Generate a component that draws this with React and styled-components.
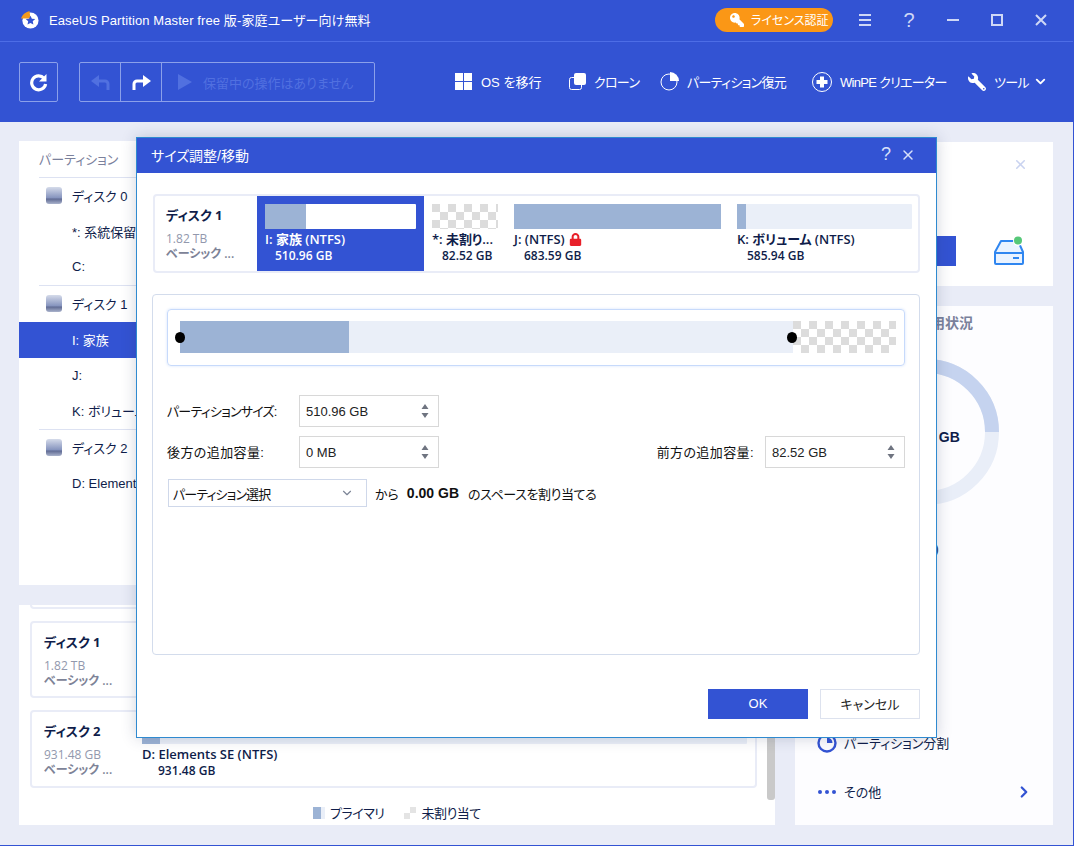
import React from "react";
import styled, { createGlobalStyle } from "styled-components";
import { ChevronDown, ChevronRight, X } from "lucide-react";
import { FaKey, FaLock, FaWrench } from "react-icons/fa";

const BLUE = "#3353d3";
const INK = "#0f1d4a";
const BAR = "#9cb3d5";
const TRACK = "#eaeff8";
const SANS = `"Liberation Sans", "Noto Sans CJK JP", sans-serif`;
const UI = `"Open Sans", "Noto Sans CJK JP", sans-serif`;

const Global = createGlobalStyle`
  html, body { margin: 0; padding: 0; }
  body { font-family: ${SANS}; font-size: 13px; color: ${INK}; font-feature-settings: "palt"; }
  * { box-sizing: border-box; }
`;

const checker = `
  background-color: #fff;
  background-image: conic-gradient(transparent 25%, #dcdcdc 0 50%, transparent 0 75%, #dcdcdc 0);
  background-size: 16px 16px;
`;

function App() {
  return (
    <>
      <Global />
      <Page>
        <Header>
          <TitleBar>
            <Logo viewBox="0 0 20 20">
              <circle cx="11" cy="11" r="8.5" fill="#fff" />
              <path d="M1 9 Q3 3 10 1 L11 9 Z" fill="#f39a1c" />
              <path d="M11 6 l1.5 3.2 3.5.4-2.6 2.3.7 3.4-3.1-1.7-3.1 1.7.7-3.4-2.6-2.3 3.5-.4z" fill={BLUE} />
            </Logo>
            <AppTitle>EaseUS Partition Master free 版-家庭ユーザー向け無料</AppTitle>
            <LicenseButton><FaKey size={14} style={{ transform: "scaleX(-1)" }} />ライセンス認証</LicenseButton>
            <WinButtons>
              <WinIcon viewBox="0 0 16 16"><path d="M2 3h12M2 8h12M2 13h12" /></WinIcon>
              <HelpMark>?</HelpMark>
              <WinIcon viewBox="0 0 16 16"><path d="M2 8h12" /></WinIcon>
              <WinIcon viewBox="0 0 16 16"><rect x="3" y="3" width="10" height="10" /></WinIcon>
              <WinIcon viewBox="0 0 16 16"><path d="M3 3l10 10M13 3L3 13" /></WinIcon>
            </WinButtons>
          </TitleBar>
          <Toolbar>
            <RefreshButton>
              <svg width="20" height="20" viewBox="0 0 20 20">
                <path d="M15 6.2A7 7 0 1 0 16.6 12" fill="none" stroke="#fff" strokeWidth="3.2" />
                <path d="M17.5 2v7.5H10z" fill="#fff" />
              </svg>
            </RefreshButton>
            <PendingGroup>
              <PendingCell $dim><ArrowIcon $flip /></PendingCell>
              <PendingCell><ArrowIcon /></PendingCell>
              <PendingText>
                <svg width="14" height="16" viewBox="0 0 14 16"><path d="M0 0l14 8-14 8z" fill="#5170e0" /></svg>
                保留中の操作はありません
              </PendingText>
            </PendingGroup>
            <ToolItems>
              <ToolItem $w={114}>
                <svg width="17" height="17" viewBox="0 0 17 17" fill="#fff"><rect width="8" height="8" /><rect x="9" width="8" height="8" /><rect y="9" width="8" height="8" /><rect x="9" y="9" width="8" height="8" /></svg>
                OS を移行
              </ToolItem>
              <ToolItem $w={91} $tight>
                <svg width="17" height="17" viewBox="0 0 17 17"><rect x=".5" y="4.5" width="12" height="12" rx="2" fill="none" stroke="#fff" /><rect x="5" y="0" width="12" height="12" rx="2" fill="#fff" /></svg>
                クローン
              </ToolItem>
              <ToolItem $w={152} $tight>
                <svg width="19" height="19" viewBox="0 0 19 19"><circle cx="9" cy="10" r="8" fill="none" stroke="#fff" /><path d="M10 0a9 9 0 0 1 9 9h-9z" fill="#fff" /></svg>
                パーティション復元
              </ToolItem>
              <ToolItem $w={156} $tight>
                <svg width="20" height="20" viewBox="0 0 20 20"><circle cx="10" cy="10" r="9.5" fill="none" stroke="#fff" /><path d="M8 4.5h4V8h3.5v4H12v3.5H8V12H4.5V8H8z" fill="#fff" /></svg>
                WinPE クリエーター
              </ToolItem>
              <ToolItem $tight>
                <FaWrench size={18} style={{ transform: "scaleX(-1)" }} />
                ツール
                <ChevronDown size={15} strokeWidth={3} style={{ marginLeft: -4 }} />
              </ToolItem>
            </ToolItems>
          </Toolbar>
        </Header>

        <Main>
          <LeftColumn>
            <TreePanel>
              <TreeHead>パーティション</TreeHead>
              <TreeRow $disk><DiskIcon />ディスク 0</TreeRow>
              <TreeRow>*: 系統保留</TreeRow>
              <TreeRow $last>C:</TreeRow>
              <TreeRow $disk><DiskIcon />ディスク 1</TreeRow>
              <TreeRow $active>I: 家族</TreeRow>
              <TreeRow>J:</TreeRow>
              <TreeRow $last>K: ボリューム</TreeRow>
              <TreeRow $disk><DiskIcon />ディスク 2</TreeRow>
              <TreeRow>D: Elements SE</TreeRow>
            </TreePanel>
            <MapPanel>
              <MapScroll>
                <CardStub />
                <DiskCard>
                  <DiskInfo name="ディスク 1" size="1.82 TB" />
                </DiskCard>
                <DiskCard>
                  <DiskInfo name="ディスク 2" size="931.48 GB" />
                  <CardPartition>
                    <UsageBar><UsageFill style={{ width: "3%" }} /></UsageBar>
                    <PartName>D: Elements SE (NTFS)</PartName>
                    <PartSize $wide>931.48 GB</PartSize>
                  </CardPartition>
                </DiskCard>
                <ScrollThumb />
              </MapScroll>
              <Legend>
                <LegendKey $primary />プライマリ
                <LegendKey />未割り当て
              </Legend>
            </MapPanel>
          </LeftColumn>

          <RightColumn>
            <InfoPanel>
              <InfoClose><X size={15} color="#c9d3f0" strokeWidth={2.5} /></InfoClose>
              <InfoActions>
                <InfoButton />
                <svg width="30" height="30" viewBox="0 0 30 30">
                  <path d="M7 5h17l5 11v11a1 1 0 0 1-1 1H2a1 1 0 0 1-1-1V16z" fill="#eaf3ff" stroke="#2f86f0" strokeWidth="2" strokeLinejoin="round" />
                  <path d="M1 17h28" stroke="#2f86f0" strokeWidth="2" />
                  <rect x="19" y="21" width="6" height="2" fill="#2f86f0" />
                  <circle cx="24" cy="5" r="5" fill="#fff" />
                  <circle cx="24" cy="4.5" r="4" fill="#56c878" />
                </svg>
              </InfoActions>
            </InfoPanel>
            <UsagePanel>
              <UsageTitle>パーティション使用状況</UsageTitle>
              <Donut>
                <svg width="146" height="146" viewBox="0 0 146 146">
                  <circle cx="73" cy="73" r="66" fill="none" stroke="#e9eef8" strokeWidth="14" />
                  <path d="M73 7A66 66 0 0 1 139 73" fill="none" stroke="#c5d3ef" strokeWidth="14" />
                </svg>
                <DonutLabel>510.96 GB</DonutLabel>
              </Donut>
              <UsageNote>(使用済み)</UsageNote>
              <ActionList>
                <ActionRow>
                  <svg width="20" height="20" viewBox="0 0 20 20"><circle cx="10" cy="10" r="8.5" fill="none" stroke={BLUE} strokeWidth="2.4" /><path d="M10 4.5a5.5 5.5 0 0 1 5.5 5.5H10z" fill={BLUE} /></svg>
                  パーティション分割
                </ActionRow>
                <ActionRow>
                  <svg width="20" height="20" viewBox="0 0 20 20" fill={BLUE}><circle cx="3" cy="10" r="2" /><circle cx="10" cy="10" r="2" /><circle cx="17" cy="10" r="2" /></svg>
                  その他
                  <ChevronRight size={18} color={BLUE} strokeWidth={3} style={{ marginLeft: "auto" }} />
                </ActionRow>
              </ActionList>
            </UsagePanel>
          </RightColumn>
        </Main>

        <Modal>
          <ModalHead>
            サイズ調整/移動
            <ModalTools>
              <span>?</span>
              <X size={16} strokeWidth={2.2} />
            </ModalTools>
          </ModalHead>
          <ModalBody>
            <DiskStrip>
              <StripInfo>
                <DiskName>ディスク 1</DiskName>
                <DiskSize>1.82 TB</DiskSize>
                <DiskKind>ベーシック ...</DiskKind>
              </StripInfo>
              <Partition $active $w={167}>
                <UsageBar $white><UsageFill style={{ width: "27%" }} /></UsageBar>
                <PartName>I: 家族 (NTFS)</PartName>
                <PartSize>510.96 GB</PartSize>
              </Partition>
              <Partition $w={82}>
                <CheckerBar />
                <PartName>*: 未割り...</PartName>
                <PartSize>82.52 GB</PartSize>
              </Partition>
              <Partition $w={223}>
                <UsageBar><UsageFill style={{ width: "100%" }} /></UsageBar>
                <PartName>J: (NTFS) <FaLock size={13} color="#e8202a" /></PartName>
                <PartSize>683.59 GB</PartSize>
              </Partition>
              <Partition $w={191}>
                <UsageBar><UsageFill style={{ width: "5%" }} /></UsageBar>
                <PartName>K: ボリューム (NTFS)</PartName>
                <PartSize>585.94 GB</PartSize>
              </Partition>
            </DiskStrip>

            <ResizeBox>
              <SliderFrame>
                <SliderTrack>
                  <SliderUsed />
                  <SliderFree />
                  <Handle $x={0} />
                  <Handle $x={612} />
                </SliderTrack>
              </SliderFrame>
              <Fields>
                <FieldRow>
                  <FieldLabel $kana>パーティションサイズ:</FieldLabel>
                  <Spin value="510.96 GB" />
                </FieldRow>
                <FieldRow>
                  <FieldLabel>後方の追加容量:</FieldLabel>
                  <Spin value="0 MB" />
                  <FieldLabel $right>前方の追加容量:</FieldLabel>
                  <Spin value="82.52 GB" />
                </FieldRow>
                <SelectRow>
                  <Select><SelectText>パーティション選択</SelectText><ChevronDown size={14} color="#7d8597" /></Select>
                  から<strong>0.00 GB</strong><Tail>のスペースを割り当てる</Tail>
                </SelectRow>
              </Fields>
            </ResizeBox>

            <ModalFooter>
              <PrimaryButton>OK</PrimaryButton>
              <GhostButton>キャンセル</GhostButton>
            </ModalFooter>
          </ModalBody>
        </Modal>
      </Page>
    </>
  );
}

export default App;

function ArrowIcon({ $flip }) {
  return (
    <svg width="19" height="18" viewBox="0 0 19 18" style={$flip ? { transform: "scaleX(-1)" } : undefined}>
      <path d="M2 17v-6a3 3 0 0 1 3-3h8" fill="none" stroke="currentColor" strokeWidth="3" />
      <path d="M11 2l8 6-8 6z" fill="currentColor" />
    </svg>
  );
}

function DiskInfo({ name, size }) {
  return (
    <CardInfo>
      <DiskName>{name}</DiskName>
      <DiskSize>{size}</DiskSize>
      <DiskKind>ベーシック ...</DiskKind>
    </CardInfo>
  );
}

function Spin({ value }) {
  return (
    <SpinBox>
      {value}
      <SpinArrows>
        <svg width="8" height="14" viewBox="0 0 8 14" fill="#6f7480"><path d="M4 0l3.5 5h-7zM4 14L.5 9h7z" /></svg>
      </SpinArrows>
    </SpinBox>
  );
}

function DiskIcon() {
  return (
    <svg width="16" height="17" viewBox="0 0 16 17" style={{ marginRight: 10, marginLeft: -26 }}>
      <defs>
        <linearGradient id="hdd" x1="0" y1="0" x2="0" y2="1">
          <stop offset="0" stopColor="#d5dbea" />
          <stop offset="0.65" stopColor="#8492bd" />
          <stop offset="0.7" stopColor="#5f6a93" />
          <stop offset="1" stopColor="#aab3cc" />
        </linearGradient>
      </defs>
      <rect width="16" height="17" rx="3" fill="url(#hdd)" />
    </svg>
  );
}

const Page = styled.div`
  position: relative;
  width: 1074px;
  height: 846px;
  overflow: hidden;
  display: flex;
  flex-direction: column;
  background: #e9ecf7;
  border-right: 1px solid ${BLUE};
  border-bottom: 1px solid ${BLUE};
`;

const Header = styled.header`
  height: 122px;
  background: ${BLUE};
  color: #fff;
  flex: none;
`;

const TitleBar = styled.div`
  height: 42px;
  display: flex;
  align-items: center;
  padding: 0 24px 2px 20px;
  border-bottom: 1px solid #4d6de6;
`;

const Logo = styled.svg`
  width: 19px;
  height: 19px;
  margin-right: 10px;
`;

const AppTitle = styled.div`
  font-size: 13px;
  letter-spacing: 0.1px;
  white-space: nowrap;
`;

const LicenseButton = styled.div`
  margin-left: auto;
  width: 118px;
  height: 24px;
  border-radius: 12px;
  background: #fb9716;
  display: flex;
  align-items: center;
  gap: 7px;
  padding-left: 15px;
  font-size: 12px;
  white-space: nowrap;
`;

const WinButtons = styled.div`
  display: flex;
  align-items: center;
  gap: 28px;
  margin-left: 24px;
`;

const WinIcon = styled.svg`
  width: 16px;
  height: 16px;
  fill: none;
  stroke: #cfd8f6;
  stroke-width: 2;
`;

const HelpMark = styled.span`
  width: 16px;
  text-align: center;
  font-size: 20px;
  line-height: 16px;
  color: #cfd8f6;
`;

const Toolbar = styled.div`
  height: 80px;
  display: flex;
  align-items: flex-start;
  padding: 20px 0 0 19px;
`;

const RefreshButton = styled.div`
  width: 39px;
  height: 40px;
  border: 1px solid #8ba0ea;
  border-radius: 2px;
  display: flex;
  align-items: center;
  justify-content: center;
`;

const PendingGroup = styled.div`
  margin-left: 21px;
  width: 296px;
  height: 40px;
  border: 1px solid #8ba0ea;
  border-radius: 2px;
  display: flex;
`;

const PendingCell = styled.div`
  width: 41px;
  display: flex;
  align-items: center;
  justify-content: center;
  border-right: 1px solid #8ba0ea;
  color: ${(p) => (p.$dim ? "#5170e0" : "#fff")};
`;

const PendingText = styled.div`
  display: flex;
  align-items: center;
  gap: 11px;
  padding-left: 16px;
  font-size: 13px;
  color: #5170e0;
  white-space: nowrap;
`;

const ToolItems = styled.div`
  display: flex;
  height: 39px;
  margin-left: 80px;
`;

const ToolItem = styled.div`
  display: flex;
  align-items: center;
  gap: 9px;
  font-size: 13px;
  white-space: nowrap;
  flex: none;
  ${(p) => p.$w && `width: ${p.$w}px;`}
  ${(p) => p.$tight && `gap: 8px; letter-spacing: -0.7px;`}
`;

const Main = styled.main`
  flex: 1;
  display: flex;
  gap: 20px;
  padding: 19px 20px 20px 19px;
  min-height: 0;
`;

const LeftColumn = styled.div`
  width: 756px;
  display: flex;
  flex-direction: column;
  gap: 20px;
`;

const RightColumn = styled.div`
  width: 258px;
  display: flex;
  flex-direction: column;
  gap: 20px;
  padding-top: 1px;
`;

const TreePanel = styled.section`
  height: 444px;
  background: #fff;
  padding-top: 1px;
`;

const TreeHead = styled.div`
  height: 36px;
  margin: 0 0 0 20px;
  line-height: 36px;
  font-size: 13px;
  color: #7b819c;
  border-bottom: 1px solid #dde2f2;
`;

const TreeRow = styled.div`
  height: 36px;
  padding-left: 53px;
  padding-bottom: 2px;
  display: flex;
  align-items: center;
  font-size: 13px;
  position: relative;
  background: ${(p) => (p.$active ? BLUE : "transparent")};
  color: ${(p) => (p.$active ? "#fff" : INK)};
  ${(p) => p.$last && `border-bottom: 1px solid #dde2f2; margin-left: 20px; padding-left: 33px;`}
`;

const MapPanel = styled.section`
  flex: 1;
  background: #fff;
  display: flex;
  flex-direction: column;
  min-height: 0;
`;

const MapScroll = styled.div`
  position: relative;
  flex: 1;
  padding: 0 18px 0 11px;
  display: flex;
  flex-direction: column;
  min-height: 0;
`;

const CardStub = styled.div`
  height: 4px;
  margin-bottom: 12px;
  border: 2px solid #e9ecf7;
  border-top: 0;
  border-radius: 0 0 4px 4px;
`;

const DiskCard = styled.div`
  height: 78px;
  margin-bottom: 12px;
  border: 2px solid #e9ecf7;
  border-radius: 4px;
  display: flex;
  position: relative;
  font-family: ${UI};
`;

const CardInfo = styled.div`
  width: 110px;
  flex: none;
  padding: 9px 0 0 12px;
`;

const CardPartition = styled.div`
  flex: 1;
  padding: 7px 8px 0 0;
`;

const DiskName = styled.div`
  font-size: 13px;
  font-weight: 700;
  color: ${INK};
  line-height: 20px;
  height: 26px;
  white-space: nowrap;
`;

const DiskSize = styled.div`
  font-size: 12px;
  color: #9298ad;
  line-height: 15px;
`;

const DiskKind = styled.div`
  font-size: 12px;
  font-weight: 600;
  color: #7d8397;
  line-height: 15px;
  white-space: nowrap;
`;

const ScrollThumb = styled.div`
  position: absolute;
  right: 0;
  top: 0;
  width: 8px;
  height: 195px;
  background: #c9c9c9;
  border-radius: 0 0 3px 3px;
`;

const Legend = styled.div`
  height: 25px;
  display: flex;
  align-items: center;
  justify-content: flex-start;
  padding: 0 0 0 294px;
  font-size: 13px;
  letter-spacing: -0.5px;
`;

const LegendKey = styled.i`
  width: 12px;
  height: 12px;
  margin: 0 5px 0 ${(p) => (p.$primary ? 0 : 20)}px;
  background: ${(p) =>
    p.$primary
      ? `linear-gradient(90deg, ${BAR} 8px, ${TRACK} 8px)`
      : `conic-gradient(#e4e4e4 25%, #fff 0 50%, #e4e4e4 0 75%, #fff 0)`};
`;

const InfoPanel = styled.section`
  height: 144px;
  background: #fff;
  display: flex;
  flex-direction: column;
`;

const InfoClose = styled.div`
  display: flex;
  justify-content: flex-end;
  padding: 15px 25px 0 0;
`;

const InfoActions = styled.div`
  margin-top: auto;
  padding-bottom: 20px;
  display: flex;
  justify-content: flex-end;
  align-items: flex-end;
  gap: 38px;
  padding-right: 29px;
`;

const InfoButton = styled.div`
  width: 140px;
  height: 30px;
  background: ${BLUE};
`;

const UsagePanel = styled.section`
  flex: 1;
  background: #fdfdff;
  display: flex;
  flex-direction: column;
  padding: 0 20px 0 22px;
`;

const UsageTitle = styled.div`
  margin-top: 6px;
  font-size: 14px;
  font-weight: 600;
  color: #7a819b;
  font-family: ${UI};
  white-space: nowrap;
  padding-left: 12px;
`;

const Donut = styled.div`
  position: relative;
  width: 146px;
  height: 146px;
  margin: 27px 0 0 36px;
`;

const DonutLabel = styled.div`
  position: absolute;
  left: 0;
  right: 0;
  top: 70px;
  text-align: center;
  font: 700 14px ${SANS};
  color: ${INK};
`;

const UsageNote = styled.div`
  margin: 34px 0 0 66px;
  font-size: 12px;
  white-space: nowrap;
`;

const ActionList = styled.div`
  margin-top: auto;
  padding-bottom: 9px;
`;

const ActionRow = styled.div`
  height: 49px;
  display: flex;
  align-items: center;
  gap: 7px;
  font-size: 13px;
  padding-right: 0;
`;

const Modal = styled.div`
  position: absolute;
  left: 136px;
  top: 137px;
  width: 801px;
  height: 601px;
  background: #fff;
  border: 1px solid #2f8ad0;
  box-shadow: 0 0 14px rgba(40, 50, 90, 0.22);
  display: flex;
  flex-direction: column;
`;

const ModalHead = styled.div`
  height: 35px;
  flex: none;
  background: ${BLUE};
  color: #fff;
  display: flex;
  align-items: center;
  padding: 0 20px 2px 14px;
  font-size: 14px;
`;

const ModalTools = styled.div`
  margin-left: auto;
  display: flex;
  align-items: center;
  gap: 9px;
  color: #d8e0fa;
  span {
    font-size: 18px;
  }
`;

const ModalBody = styled.div`
  flex: 1;
  display: flex;
  flex-direction: column;
  padding: 21px 16px 18px 15px;
`;

const DiskStrip = styled.div`
  height: 79px;
  border: 2px solid #e9ecf7;
  border-radius: 4px;
  display: flex;
  font-family: ${UI};
  padding-right: 6px;
  margin-left: 1px;
`;

const StripInfo = styled.div`
  width: 102px;
  padding: 9px 0 0 11px;
  flex: none;
`;

const Partition = styled.div`
  width: ${(p) => p.$w}px;
  flex: none;
  height: 75px;
  padding: 8px 8px 0;
  background: ${(p) => (p.$active ? BLUE : "transparent")};
  color: ${(p) => (p.$active ? "#fff" : INK)};
`;

const UsageBar = styled.div`
  height: 25px;
  border-radius: 1px;
  background: ${(p) => (p.$white ? "#fff" : TRACK)};
`;

const UsageFill = styled.div`
  height: 100%;
  background: ${BAR};
`;

const CheckerBar = styled.div`
  height: 25px;
  ${checker}
`;

const PartName = styled.div`
  margin-top: 1px;
  font-size: 13px;
  font-weight: 600;
  line-height: 18px;
  white-space: nowrap;
  display: flex;
  align-items: center;
  gap: 4px;
`;

const PartSize = styled.div`
  font-size: 12px;
  font-weight: 600;
  line-height: 15px;
  padding-left: ${(p) => (p.$wide ? 16 : 10)}px;
  white-space: nowrap;
`;

const ResizeBox = styled.div`
  height: 361px;
  margin-top: 21px;
  border: 1px solid #d3dcec;
  border-radius: 4px;
  padding: 14px 14px 0;
`;

const SliderFrame = styled.div`
  height: 57px;
  border: 1px solid #c7dafb;
  border-radius: 4px;
  box-shadow: 0 0 3px #d5e3fb;
  padding: 11px 8px 0 12px;
`;

const SliderTrack = styled.div`
  position: relative;
  height: 32px;
  background: ${TRACK};
  display: flex;
  justify-content: space-between;
`;

const SliderUsed = styled.div`
  width: 169px;
  background: ${BAR};
`;

const SliderFree = styled.div`
  width: 103px;
  ${checker}
`;

const Handle = styled.i`
  position: absolute;
  left: ${(p) => p.$x - 5}px;
  top: 11px;
  width: 10px;
  height: 11px;
  border-radius: 50%;
  background: #000;
`;

const Fields = styled.div`
  margin-top: 29px;
  display: flex;
  flex-direction: column;
  gap: 9px;
`;

const FieldRow = styled.div`
  display: flex;
  align-items: center;
`;

const FieldLabel = styled.div`
  width: ${(p) => (p.$right ? 326 : 132)}px;
  padding-right: ${(p) => (p.$right ? 11 : 0)}px;
  padding-bottom: 2px;
  text-align: ${(p) => (p.$right ? "right" : "left")};
  font-size: 13px;
  letter-spacing: ${(p) => (p.$kana ? "-0.8px" : "0.4px")};
  color: #111;
  white-space: nowrap;
`;

const SpinBox = styled.div`
  width: 140px;
  height: 32px;
  border: 1px solid #d8d8d8;
  display: flex;
  align-items: center;
  justify-content: space-between;
  padding: 0 9px 0 6px;
  font-size: 13px;
  color: #222;
`;

const SpinArrows = styled.span`
  display: flex;
`;

const SelectRow = styled.div`
  display: flex;
  align-items: center;
  margin-top: 2px;
  padding: 0 0 2px 1px;
  font-size: 13px;
  color: #111;
  strong {
    margin: 0 9px 0 8px;
    font-size: 14px;
  }
`;

const Select = styled.div`
  width: 199px;
  height: 28px;
  margin-right: 8px;
  border: 1px solid #cfd8ea;
  display: flex;
  align-items: center;
  justify-content: space-between;
  padding: 0 12px 0 4px;
  font-size: 13px;
`;

const SelectText = styled.span`
  letter-spacing: -0.9px;
`;

const Tail = styled.span`
  letter-spacing: -0.4px;
`;

const ModalFooter = styled.div`
  margin-top: auto;
  display: flex;
  justify-content: flex-end;
  gap: 12px;
`;

const PrimaryButton = styled.div`
  width: 100px;
  height: 30px;
  padding-bottom: 2px;
  background: ${BLUE};
  color: #fff;
  display: flex;
  align-items: center;
  justify-content: center;
  font-size: 13px;
`;

const GhostButton = styled(PrimaryButton)`
  background: #fff;
  color: #222;
  border: 1px solid #dde2ee;
`;
